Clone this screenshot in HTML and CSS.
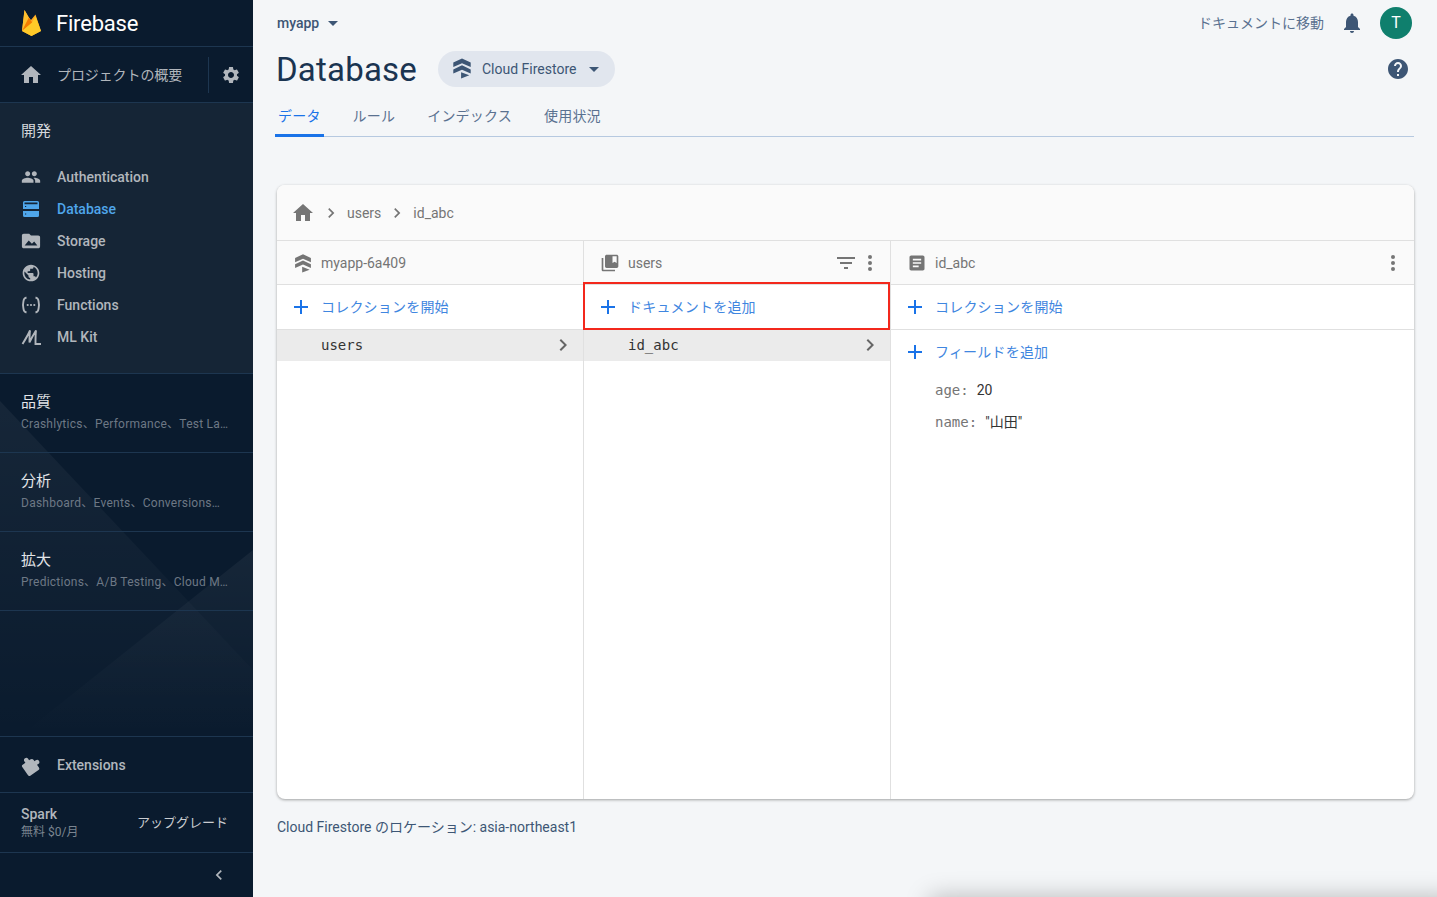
FILE: index.html
```html
<!DOCTYPE html>
<html lang="ja">
<head>
  <meta charset="UTF-8" />
  <meta name="viewport" content="width=device-width, initial-scale=1.0" />
  <title>Database | Firebase</title>
  <link rel="stylesheet" href="styles.css">
</head>
<body>
  <div class="app">
    <aside class="sidebar">
      <div class="brand">
        <svg class="flame" viewBox="0 0 20 26" width="20" height="26">
          <path fill="#FFA726" d="M0 21 2.500 0 6.500 7 9 10l4.500-5.500L19 21 9.500 26z"/>
          <path fill="#FFC02E" d="M0 21 2.500 0l5 8.500z"/>
          <path fill="#F57C00" d="M0 21 6.800 7.500l3.700 5.500z"/>
          <path fill="#FFCA28" d="M0 21 10 12.500 13.500 6 19 21 9.500 26z"/>
        </svg>
        <span class="brand-name">Firebase</span>
      </div>
      <div class="project-row">
        <svg class="icon-24" viewBox="0 0 24 24"><path d="M10 20v-6h4v6h5v-8h3L12 3 2 12h3v8z"/></svg>
        <span class="project-label">プロジェクトの概要</span>
        <span class="project-divider"></span>
        <svg class="icon-20 project-gear" viewBox="0 0 24 24"><path d="M19.14 12.94c.04-.3.06-.61.06-.94 0-.32-.02-.64-.07-.94l2.03-1.58c.18-.14.23-.41.12-.61l-1.92-3.32c-.12-.22-.37-.29-.59-.22l-2.39.96c-.5-.38-1.03-.7-1.62-.94l-.36-2.54c-.04-.24-.24-.41-.48-.41h-3.84c-.24 0-.43.17-.47.41l-.36 2.54c-.59.24-1.13.57-1.62.94l-2.39-.96c-.22-.08-.47 0-.59.22L2.74 8.87c-.12.21-.08.47.12.61l2.03 1.58c-.05.3-.09.63-.09.94s.02.64.07.94l-2.03 1.58c-.18.14-.23.41-.12.61l1.92 3.32c.12.22.37.29.59.22l2.39-.96c.5.38 1.03.7 1.62.94l.36 2.54c.05.24.24.41.48.41h3.84c.24 0 .44-.17.47-.41l.36-2.54c.59-.24 1.13-.56 1.62-.94l2.39.96c.22.08.47 0 .59-.22l1.92-3.32c.12-.22.07-.47-.12-.61l-2.01-1.58zM12 15.6c-1.98 0-3.6-1.62-3.6-3.6s1.62-3.6 3.6-3.6 3.6 1.62 3.6 3.6-1.62 3.6-3.6 3.6z"/></svg>
      </div>

      <nav class="dev-section">
        <div class="dev-title">開発</div>
        <a class="nav-item">
          <svg class="icon-20" viewBox="0 0 24 24"><path d="M16 11c1.66 0 2.99-1.34 2.99-3S17.66 5 16 5c-1.66 0-3 1.34-3 3s1.34 3 3 3zm-8 0c1.66 0 2.99-1.34 2.99-3S9.66 5 8 5C6.34 5 5 6.34 5 8s1.34 3 3 3zm0 2c-2.33 0-7 1.17-7 3.5V19h14v-2.5c0-2.33-4.67-3.5-7-3.5zm8 0c-.29 0-.62.02-.97.05 1.16.84 1.97 1.97 1.97 3.45V19h6v-2.5c0-2.33-4.67-3.5-7-3.5z"/></svg>
          Authentication
        </a>
        <a class="nav-item active">
          <svg class="icon-20" viewBox="0 0 20 20"><path fill-rule="evenodd" d="M3.500 2h13A1.500 1.500 0 0 1 18 3.500V10H2V3.500A1.500 1.500 0 0 1 3.500 2zm0 1.500V5.200h13V3.500zM2 12h16v4.500a1.500 1.500 0 0 1-1.500 1.500h-13A1.500 1.500 0 0 1 2 16.500z"/><path fill="#152536" d="M4 7h1.200v1H4zM4 14.500h1.200v1H4z"/></svg>
          Database
        </a>
        <a class="nav-item">
          <svg class="icon-20" viewBox="1 1 22 22"><path d="M20 6h-8l-2-2H4c-1.100 0-2 .9-2 2v12c0 1.100.9 2 2 2h16c1.100 0 2-.9 2-2V8c0-1.100-.9-2-2-2zM5 17l4.500-5.500 3.500 3.500 2.500-2.500L19 17z"/></svg>
          Storage
        </a>
        <a class="nav-item">
          <svg class="icon-20" viewBox="0 0 24 24"><path d="M12 2C6.480 2 2 6.480 2 12s4.480 10 10 10 10-4.480 10-10S17.520 2 12 2zm-1 17.930c-3.950-.49-7-3.850-7-7.930 0-.62.08-1.210.21-1.790L9 15v1c0 1.100.9 2 2 2v1.930zm6.900-2.540c-.26-.81-1-1.390-1.900-1.390h-1v-3c0-.55-.45-1-1-1H8v-2h2c.55 0 1-.45 1-1V7h2c1.100 0 2-.9 2-2v-.41c2.930 1.190 5 4.060 5 7.410 0 2.080-.8 3.970-2.100 5.390z"/></svg>
          Hosting
        </a>
        <a class="nav-item">
          <svg class="icon-20" viewBox="0 0 20 20"><path class="stroke-only" d="M5.500 2.500C2.800 3.200 2.500 4.500 2 10c.5 5.500.8 6.800 3.500 7.500M14.500 2.500c2.700.7 3 2 3.500 7.500-.5 5.500-.8 6.800-3.500 7.500"/><circle cx="6.700" cy="10" r="1.100"/><circle cx="10" cy="10" r="1.100"/><circle cx="13.300" cy="10" r="1.100"/></svg>
          Functions
        </a>
        <a class="nav-item">
          <svg class="icon-20" viewBox="0 0 20 20"><path class="stroke-only" d="M1.500 17C4 13 7 8 9 3.500c-.5 4-.5 8.500-.5 12C10 12 12.500 7.500 15 3.500c-.5 4-.5 8-.5 13.500H20"/></svg>
          ML Kit
        </a>
      </nav>

      <div class="lower">
        <svg class="lower-bg" viewBox="0 0 253 362" preserveAspectRatio="none">
          <defs>
            <linearGradient id="fade" x1="0" y1="0" x2="0" y2="1">
              <stop offset="0" stop-color="#fff" stop-opacity=".05"/>
              <stop offset="1" stop-color="#fff" stop-opacity="0"/>
            </linearGradient>
          </defs>
          <path fill="url(#fade)" d="M0 27 253 296V362H0z"/>
          <path fill="url(#fade)" d="M253 176V362H20z"/>
        </svg>
        <div class="group">
          <div class="group-title">品質</div>
          <div class="group-sub">Crashlytics、Performance、Test La…</div>
        </div>
        <div class="group">
          <div class="group-title">分析</div>
          <div class="group-sub">Dashboard、Events、Conversions…</div>
        </div>
        <div class="group">
          <div class="group-title">拡大</div>
          <div class="group-sub">Predictions、A/B Testing、Cloud M…</div>
        </div>
      </div>

      <a class="extensions">
        <svg class="icon-20 ext-icon" viewBox="0 0 24 24"><path d="M4 6h4V4a2.700 2.700 0 0 1 5.400 0v2H15a3 3 0 0 1 3 3v1.600h2a2.700 2.700 0 0 1 0 5.400h-2V20a2 2 0 0 1-2 2H4a2 2 0 0 1-2-2V8a2 2 0 0 1 2-2z"/></svg>
        Extensions
      </a>
      <div class="plan">
        <div>
          <div class="plan-name">Spark</div>
          <div class="plan-price">無料 $0/月</div>
        </div>
        <span class="plan-upgrade">アップグレード</span>
      </div>
      <div class="collapse">
        <svg class="icon-20" viewBox="0 0 24 24"><path d="M15.410 7.410 14 6l-6 6 6 6 1.410-1.410L10.830 12z"/></svg>
      </div>
    </aside>

    <main class="main">
      <header class="topbar">
        <div class="project-picker">myapp <span class="caret"></span></div>
        <div class="topbar-right">
          <span class="docs-link">ドキュメントに移動</span>
          <svg class="icon-24 bell" viewBox="0 0 24 24"><path d="M12 22c1.100 0 2-.9 2-2h-4c0 1.100.89 2 2 2zm6-6v-5c0-3.070-1.640-5.640-4.500-6.320V4c0-.83-.67-1.500-1.500-1.500s-1.500.67-1.500 1.500v.68C7.630 5.360 6 7.920 6 11v5l-2 2v1h16v-1l-2-2z"/></svg>
          <span class="avatar">T</span>
        </div>
      </header>

      <div class="title-row">
        <h1 class="page-title">Database</h1>
        <div class="db-pill">
          <svg class="firestore-icon" viewBox="0 0 24 24"><path d="M12 1.500 21.500 6v5L12 6.800 2.500 11V6zM12 9l9.500 4.500V18L12 13.800 2.500 18v-4.500zM11 16.500l9 3.500-9 3.500z"/></svg>
          <span>Cloud Firestore</span>
          <span class="caret"></span>
        </div>
        <svg class="icon-24 help" viewBox="0 0 24 24"><path d="M12 2C6.480 2 2 6.480 2 12s4.480 10 10 10 10-4.480 10-10S17.520 2 12 2zm1 17h-2v-2h2v2zm2.070-7.750-.9.92C13.450 12.900 13 13.500 13 15h-2v-.5c0-1.100.45-2.100 1.170-2.830l1.240-1.260c.37-.36.59-.86.59-1.410 0-1.100-.9-2-2-2s-2 .9-2 2H8c0-2.210 1.790-4 4-4s4 1.790 4 4c0 .88-.36 1.680-.93 2.250z"/></svg>
      </div>

      <div class="tabs">
        <a class="tab active">データ</a>
        <a class="tab">ルール</a>
        <a class="tab">インデックス</a>
        <a class="tab">使用状況</a>
      </div>

      <section class="card">
        <div class="crumbs">
          <svg class="icon-24" viewBox="0 0 24 24"><path d="M10 20v-6h4v6h5v-8h3L12 3 2 12h3v8z"/></svg>
          <svg class="icon-20" viewBox="0 0 24 24"><path d="M10 6 8.590 7.410 13.170 12l-4.580 4.590L10 18l6-6z"/></svg>
          <span>users</span>
          <svg class="icon-20" viewBox="0 0 24 24"><path d="M10 6 8.590 7.410 13.170 12l-4.580 4.590L10 18l6-6z"/></svg>
          <span>id_abc</span>
        </div>
        <div class="columns">
          <div class="col">
            <div class="col-head">
              <svg class="icon-20" viewBox="0 0 24 24"><path d="M12 1.500 21.500 6v5L12 6.800 2.500 11V6zM12 9l9.500 4.500V18L12 13.800 2.500 18v-4.500zM11 16.500l9 3.500-9 3.500z"/></svg>
              <span>myapp-6a409</span>
            </div>
            <div class="add-row">
              <svg class="icon-24" viewBox="0 0 24 24"><path d="M19 13h-6v6h-2v-6H5v-2h6V5h2v6h6v2z"/></svg>
              <span class="add-label">コレクションを開始</span>
            </div>
            <div class="list-row">
              <span>users</span>
              <svg class="icon-24" viewBox="0 0 24 24"><path d="M10 6 8.590 7.410 13.170 12l-4.580 4.590L10 18l6-6z"/></svg>
            </div>
          </div>

          <div class="col">
            <div class="col-head">
              <svg class="icon-20" viewBox="0 0 24 24"><path d="M4 6H2v14c0 1.100.9 2 2 2h14v-2H4z"/><path d="M20 2H8c-1.100 0-2 .9-2 2v12c0 1.100.9 2 2 2h12c1.100 0 2-.9 2-2V4c0-1.100-.9-2-2-2zm0 10-2.500-1.500L15 12V4h5z"/></svg>
              <span>users</span>
              <span class="head-actions">
                <svg class="icon-24" viewBox="0 0 24 24"><path d="M10 18h4v-2h-4zM3 6v2h18V6zm3 7h12v-2H6z"/></svg>
                <svg class="icon-24" viewBox="0 0 24 24"><circle cx="12" cy="6" r="2"/><circle cx="12" cy="12" r="2"/><circle cx="12" cy="18" r="2"/></svg>
              </span>
            </div>
            <div class="add-row marked">
              <svg class="icon-24" viewBox="0 0 24 24"><path d="M19 13h-6v6h-2v-6H5v-2h6V5h2v6h6v2z"/></svg>
              <span class="add-label">ドキュメントを追加</span>
            </div>
            <div class="list-row">
              <span>id_abc</span>
              <svg class="icon-24" viewBox="0 0 24 24"><path d="M10 6 8.590 7.410 13.170 12l-4.580 4.590L10 18l6-6z"/></svg>
            </div>
          </div>

          <div class="col">
            <div class="col-head">
              <svg class="icon-20" viewBox="0 0 24 24"><path d="M19 3H5c-1.100 0-2 .9-2 2v14c0 1.100.9 2 2 2h14c1.100 0 2-.9 2-2V5c0-1.100-.9-2-2-2zm-5 14H7v-2h7zm3-4H7v-2h10zm0-4H7V7h10z"/></svg>
              <span>id_abc</span>
              <span class="head-actions">
                <svg class="icon-24" viewBox="0 0 24 24"><circle cx="12" cy="6" r="2"/><circle cx="12" cy="12" r="2"/><circle cx="12" cy="18" r="2"/></svg>
              </span>
            </div>
            <div class="add-row">
              <svg class="icon-24" viewBox="0 0 24 24"><path d="M19 13h-6v6h-2v-6H5v-2h6V5h2v6h6v2z"/></svg>
              <span class="add-label">コレクションを開始</span>
            </div>
            <div class="add-row no-line">
              <svg class="icon-24" viewBox="0 0 24 24"><path d="M19 13h-6v6h-2v-6H5v-2h6V5h2v6h6v2z"/></svg>
              <span class="add-label">フィールドを追加</span>
            </div>
            <div class="field"><span class="field-key">age:</span><span>20</span></div>
            <div class="field"><span class="field-key">name:</span><span class="field-text">"山田"</span></div>
          </div>
        </div>
      </section>

      <p class="location">Cloud Firestore のロケーション: asia-northeast1</p>
    </main>
  </div>
  <div class="toast-edge"></div>
</body>
</html>
```

FILE: styles.css
```css
*,*::before,*::after{box-sizing:border-box;margin:0;padding:0;}
body{
  font-family:Roboto,"Noto Sans CJK JP",sans-serif;
  font-size:14px;
  background:#f4f6f8;
  color:#3d5675;
  overflow:hidden;
  height:897px;
}
svg{display:block;flex:none;fill:currentColor;}
.icon-20{width:20px;height:20px;}
.icon-24{width:24px;height:24px;}
.stroke-only{fill:none;stroke:currentColor;stroke-width:1.900;}

.app{display:flex;height:897px;}

/* sidebar */
.sidebar{
  width:253px;
  flex:none;
  display:flex;
  flex-direction:column;
  background:#0a1b2e;
  color:#b1b6bc;
}
.brand{
  height:47px;
  border-bottom:1px solid #1d3650;
  padding:0 0 0 22px;
  display:flex;align-items:center;
}
.flame{margin-top:-1px;}
.brand-name{margin-left:14px;font-size:22px;color:#fff;letter-spacing:-.2px;}
.project-row{
  height:56px;
  border-bottom:1px solid #1d3650;
  padding-left:19px;
  display:flex;align-items:center;
}
.project-label{margin-left:14px;width:126px;margin-bottom:2px;letter-spacing:-.1px;}
.project-divider{width:1px;height:36px;background:#1d3650;margin-left:25px;}
.project-gear{margin-left:12px;}

.dev-section{
  height:271px;
  background:#152536;
  border-bottom:1px solid #1d3650;
}
.dev-title{
  height:58px;
  padding:16px 0 0 21px;
  font-size:15px;
  line-height:24px;
  color:#d5d8dc;
}
.nav-item{
  height:32px;
  padding-left:21px;
  display:flex;align-items:center;gap:16px;
  font-weight:500;
}
.nav-item.active{color:#4fa6ea;}

.lower{position:relative;flex:1;}
.lower-bg{position:absolute;left:0;top:0;width:100%;height:100%;}
.group{
  position:relative;
  height:79px;
  padding:17px 21px 0;
  border-bottom:1px solid #1d3650;
}
.group-title{font-size:15px;line-height:22px;color:#e3e5e8;}
.group-sub{
  margin-top:3px;
  font-size:12px;
  line-height:16px;
  letter-spacing:.25px;
  color:#6d7885;
  white-space:nowrap;
}

.extensions{
  height:57px;
  flex:none;
  border-top:1px solid #1d3650;
  border-bottom:1px solid #1d3650;
  padding-left:21px;
  display:flex;align-items:center;gap:16px;
  font-weight:500;
}
.ext-icon{transform:rotate(-35deg);}
.plan{
  height:60px;
  flex:none;
  border-bottom:1px solid #1d3650;
  padding:0 25px 0 21px;
  display:flex;align-items:center;justify-content:space-between;
}
.plan-name{font-weight:500;line-height:18px;}
.plan-price{font-size:12px;line-height:16px;margin-top:1px;color:#7b8590;}
.plan-upgrade{font-size:13px;color:#c9ccd0;margin-bottom:2px;}
.collapse{
  height:44px;
  flex:none;
  padding-right:24px;
  display:flex;align-items:center;justify-content:flex-end;
}

/* main */
.main{flex:1;min-width:0;padding:0 23px 0 24px;}
.topbar{
  height:46px;
  display:flex;align-items:center;justify-content:space-between;
}
.project-picker{font-weight:500;display:flex;align-items:center;gap:9px;}
.caret{
  width:0;height:0;
  border-left:5px solid transparent;
  border-right:5px solid transparent;
  border-top:5px solid #3d5675;
}
.topbar-right{display:flex;align-items:center;margin-right:2px;margin-top:-1px;}
.docs-link{color:#5a7190;margin-bottom:2px;}
.bell{margin-left:16px;}
.avatar{
  width:32px;height:32px;
  margin-left:16px;
  border-radius:50%;
  background:#0f7f6d;
  color:#fff;
  font-size:16px;
  display:flex;align-items:center;justify-content:center;
}
.title-row{height:46px;display:flex;align-items:center;}
.page-title{font-size:33px;font-weight:400;color:#1a3451;line-height:46px;letter-spacing:.2px;margin:2px 0 0 -1px;}
.db-pill{
  margin-left:21px;
  height:36px;
  padding:0 16px 0 13px;
  border-radius:18px;
  background:#e1e6ee;
  display:flex;align-items:center;
}
.firestore-icon{width:22px;height:22px;margin-right:9px;margin-bottom:2px;}
.db-pill .caret{margin-left:13px;}
.help{margin-left:auto;margin-right:4px;}
.tabs{
  height:45px;
  margin-left:-2px;
  border-bottom:1px solid #b6c9e0;
  display:flex;gap:26px;
}
.tab{
  height:45px;
  padding:0 3px;
  line-height:48px;
  letter-spacing:.2px;
  color:#5a7190;
}
.tab.active{color:#1a73e8;border-bottom:3px solid #1a73e8;}

.card{
  margin-top:48px;
  height:614px;
  background:#fff;
  border-radius:8px;
  box-shadow:0 1px 3px rgba(0,0,0,.35);
  display:flex;flex-direction:column;
  overflow:hidden;
  color:#757575;
}
.crumbs{
  height:56px;
  flex:none;
  background:#fafafa;
  border-bottom:1px solid #e0e0e0;
  padding-left:14px;
  display:flex;align-items:center;gap:6px;
}
.columns{
  flex:1;
  display:grid;
  grid-template-columns:307px 307px 1fr;
}
.col{border-right:1px solid #e0e0e0;}
.col:last-child{border-right:none;}
.col-head{
  height:44px;
  background:#fafafa;
  border-bottom:1px solid #e0e0e0;
  padding:0 8px 0 16px;
  display:flex;align-items:center;gap:8px;
}
.col:last-child .col-head{padding-right:9px;}
.head-actions{margin-left:auto;display:flex;}
.add-row{
  position:relative;
  height:45px;
  border-bottom:1px solid #e0e0e0;
  padding-left:12px;
  display:flex;align-items:center;gap:8px;
  color:#3f86e0;
}
.add-row svg{color:#1a73e8;}
.add-label{margin-bottom:2px;letter-spacing:.2px;}
.add-row.no-line{border-bottom:none;height:44px;}
.add-row.marked::after{
  content:"";
  position:absolute;
  left:-1px;right:0;top:-3px;bottom:-1px;
  border:2px solid #f3281c;
}
.list-row{
  height:32px;
  margin-top:-1px;
  background:#ebebeb;
  padding:0 8px 0 44px;
  display:flex;align-items:center;justify-content:space-between;
  font-family:"DejaVu Sans Mono",monospace;
  font-size:14px;
  color:#333;
}
.list-row svg{color:#666;}
.field{
  height:32px;
  padding-left:44px;
  display:flex;align-items:center;gap:8px;
  color:#333;
}
.field-key{font-family:"DejaVu Sans Mono",monospace;color:#757575;}
.field-text{margin-bottom:2px;}
.location{margin-top:18px;line-height:20px;}

.toast-edge{
  position:fixed;
  left:930px;right:-20px;top:897px;
  height:60px;
  box-shadow:0 0 24px rgba(0,0,0,.25);
}
```
